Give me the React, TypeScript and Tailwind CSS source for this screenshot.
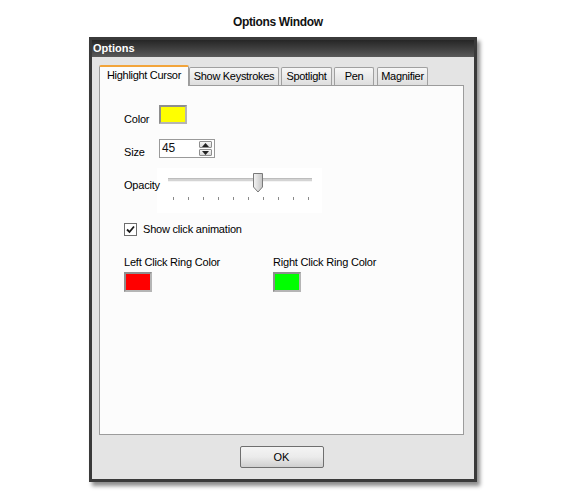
import React from "react";

const font = "font-['Liberation_Sans',Arial,sans-serif]";

const Slider = () => {
  const ticks = Array.from({ length: 10 }, (_, i) => 16 + i * 15);
  return (
    <div className="w-[165px] h-[45px] bg-white">
      <svg width="165" height="45" viewBox="0 0 165 45" className="block">
        <rect x="11" y="11" width="144" height="2" fill="#d4d4d4" />
        <rect x="11" y="13" width="144" height="1" fill="#f4f4f4" />
        <rect x="11" y="10" width="144" height="1" fill="#bdbdbd" />
        <defs>
          <linearGradient id="thumb" x1="0" x2="1" y1="0" y2="0">
            <stop offset="0" stopColor="#f4f4f4" />
            <stop offset="1" stopColor="#c4c4c4" />
          </linearGradient>
        </defs>
        <path d="M96.5 5.5 H105.5 V19 L101 24 L96.5 19 Z" fill="url(#thumb)" stroke="#7a7a7a" />
        {ticks.map((x) => (
          <rect key={x} x={x} y="29" width="1" height="3" fill="#8a8a8a" />
        ))}
      </svg>
    </div>
  );
};

const Tab = ({ label, width, active }: { label: string; width: number; active?: boolean }) =>
  active ? (
    <div
      style={{ width }}
      className="relative z-10 -mb-px h-[21px] bg-[#fcfcfc] border border-b-0 border-[#9c9c9c] border-t-2 border-t-[#f2a43a] rounded-t-[2px] flex items-start justify-center pt-[2px] text-[11px] leading-[13px] tracking-[-0.3px] text-black"
    >
      {label}
    </div>
  ) : (
    <div
      style={{ width }}
      className="h-[18px] bg-gradient-to-b from-[#f7f7f7] to-[#dedede] border border-b-0 border-[#a0a0a0] rounded-t-[2px] flex items-center justify-center text-[11px] leading-[13px] tracking-[-0.3px] text-black"
    >
      {label}
    </div>
  );

const Swatch = ({ color }: { color: string }) => (
  <div className={`w-[28px] h-[20px] border-2 border-t-[#8e8e8e] border-l-[#8e8e8e] border-b-[#b5b5b5] border-r-[#b5b5b5] ${color}`} />
);

export default function App() {
  return (
    <div className={`w-[575px] h-[497px] bg-white ${font} text-black`}>
      <div className="h-[37px] pt-[15px] pl-[233px] text-[12px] leading-[14px] font-bold tracking-[-0.35px] text-[#111]">
        Options Window
      </div>

      <div className="ml-[89px] w-[388px] h-[445px] flex flex-col border-[3px] border-[#3a3a3a] shadow-[3px_4px_4px_rgba(0,0,0,0.45)]">
        {/* title bar */}
        <div className="h-[17px] bg-gradient-to-b from-[#262626] to-[#5a5a5a] pl-[1px] flex items-center text-white font-bold text-[11px] leading-[13px]">
          Options
        </div>

        {/* body */}
        <div className="flex-1 bg-[#e4e4e4] pt-[8px] pl-[7px] pr-[10px] flex flex-col">
          <div className="flex items-end h-[20px]">
            <Tab label="Highlight Cursor" width={90} active />
            <Tab label="Show Keystrokes" width={90} />
            <div className="w-[2px]" />
            <Tab label="Spotlight" width={51} />
            <div className="w-[2px]" />
            <Tab label="Pen" width={40} />
            <div className="w-[3px]" />
            <Tab label="Magnifier" width={51} />
          </div>

          <div className="h-[350px] bg-[#fcfcfc] border border-[#9c9c9c] pl-[24px] pt-[19px] flex flex-col text-[11px] leading-[13px] tracking-[-0.2px]">
            <div className="flex items-start h-[19px]">
              <div className="w-[35px] pt-[8px]">Color</div>
              <div className="w-[28px] h-[19px] bg-[#ffff00] border-2 border-t-[#8e8e8e] border-l-[#8e8e8e] border-b-[#b5b5b5] border-r-[#b5b5b5]" />
            </div>

            <div className="flex items-start mt-[15px] h-[19px]">
              <div className="w-[35px] pt-[7px]">Size</div>
              <div className="w-[56px] h-[19px] bg-white border border-[#9a9a9a] flex items-center justify-between pl-[2px] pr-[2px]">
                <span className="text-[12px] text-[#111]">45</span>
                <div className="flex flex-col gap-[1px]">
                  <div className="w-[13px] h-[7px] bg-gradient-to-b from-[#f6f6f6] to-[#dadada] border border-[#8e8e8e] rounded-[1px] flex items-center justify-center">
                    <svg width="7" height="4" viewBox="0 0 7 4"><path d="M0 4 L3.5 0 L7 4 Z" fill="#222" /></svg>
                  </div>
                  <div className="w-[13px] h-[7px] bg-gradient-to-b from-[#f6f6f6] to-[#dadada] border border-[#8e8e8e] rounded-[1px] flex items-center justify-center">
                    <svg width="7" height="4" viewBox="0 0 7 4"><path d="M0 0 L3.5 4 L7 0 Z" fill="#222" /></svg>
                  </div>
                </div>
              </div>
            </div>

            <div className="flex items-start mt-[10px] h-[45px]">
              <div className="relative z-10 w-[33px] pt-[11px] whitespace-nowrap">Opacity</div>
              <Slider />
            </div>

            <div className="flex items-center mt-[10px] gap-[6px] h-[13px]">
              <div className="w-[13px] h-[13px] bg-white border border-[#6e6e6e] flex items-center justify-center">
                <svg width="9" height="9" viewBox="0 0 9 9">
                  <path d="M1 4.5 L3.5 7 L8 1.5" fill="none" stroke="#1a1a1a" strokeWidth="1.8" />
                </svg>
              </div>
              <span>Show click animation</span>
            </div>

            <div className="flex mt-[20px]">
              <div className="w-[149px] flex flex-col gap-[3px]">
                <span>Left Click Ring Color</span>
                <Swatch color="bg-[#ff0000]" />
              </div>
              <div className="flex flex-col gap-[3px]">
                <span>Right Click Ring Color</span>
                <Swatch color="bg-[#00ff00]" />
              </div>
            </div>
          </div>

          <div className="flex justify-center pt-[11px]">
            <button className="w-[84px] h-[22px] rounded-[2px] border border-[#6f6f6f] bg-gradient-to-b from-[#f4f4f4] via-[#ebebeb] to-[#cfcfcf] text-[11px] leading-[13px] text-black">
              OK
            </button>
          </div>
        </div>
      </div>
    </div>
  );
}
